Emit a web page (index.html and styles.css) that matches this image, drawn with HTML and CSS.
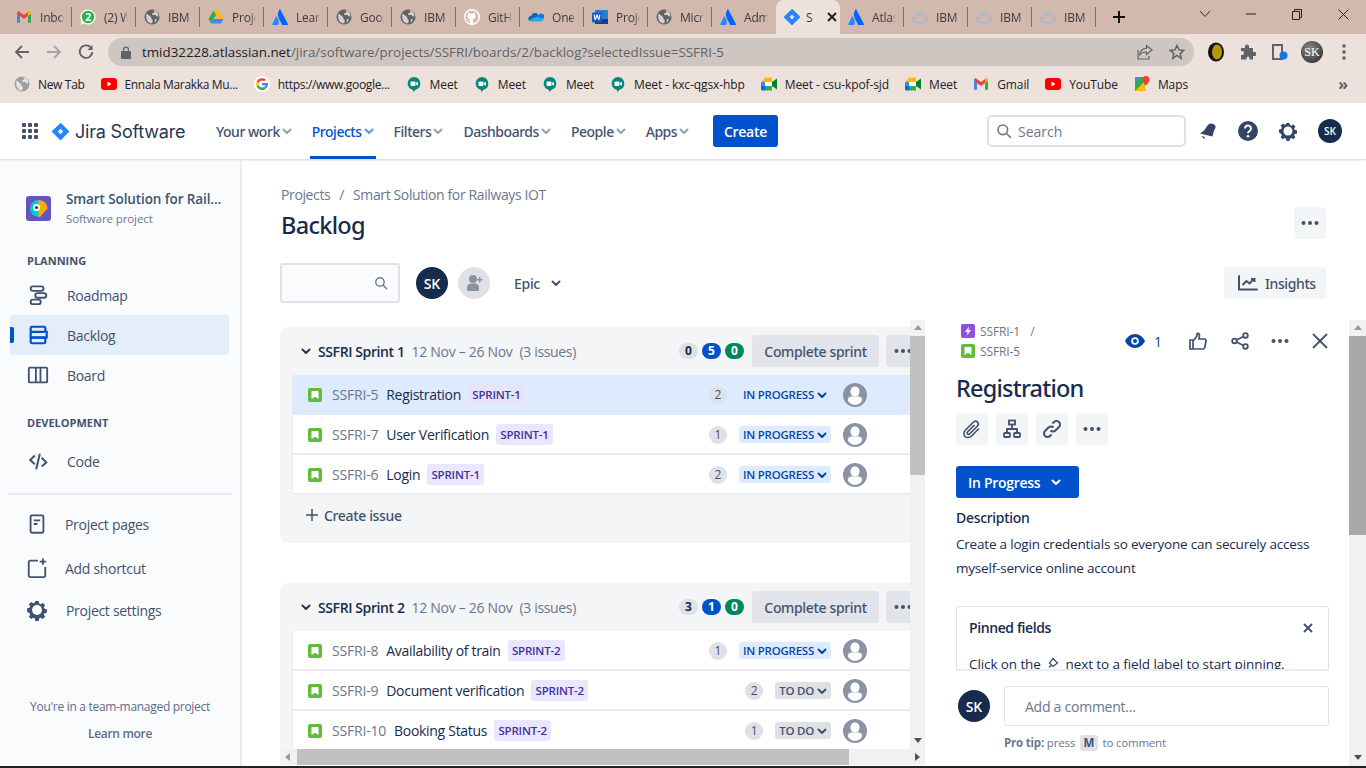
FILE: index.html
```html
<!DOCTYPE html>
<html lang="en">
<head>
    <meta charset="UTF-8">
    <meta name="viewport" content="width=device-width, initial-scale=1.0">
    <title>Backlog - Jira</title>
    <link rel="stylesheet" href="styles.css">
</head>
<body>
    <svg class="icon-defs" width="0" height="0" aria-hidden="true">
        <symbol id="i-gmail" viewBox="0 0 16 16"><path d="M1 3.500v10h3V7l4 3 4-3v6.500h3v-10L13.500 2 8 6 2.500 2z" fill="#ea4335"/><path d="M1 3.500v10h3V7z" fill="#4285f4"/><path d="M15 3.500v10h-3V7z" fill="#34a853"/><path d="M12 7V3l1.500-1L15 3.500V5z" fill="#fbbc04"/></symbol>
        <symbol id="i-whatsapp" viewBox="0 0 16 16"><path d="M8 .5a7.500 7.500 0 0 0-6.400 11.400L.6 15.500l3.700-1A7.500 7.500 0 1 0 8 .5z" fill="#fff"/><circle cx="8" cy="8" r="6.200" fill="#25b04a"/><text x="8" y="11.800" font-family="Open Sans" font-size="11" font-weight="700" fill="#fff" text-anchor="middle">2</text></symbol>
        <symbol id="i-globe" viewBox="0 0 16 16"><circle cx="8" cy="8" r="7.500" fill="#5f6368"/><path d="M2.500 4.500 7 8l.5 2 1 .5V14l-2 .5C3 13 1.500 9 2.500 4.500zM9.500 1l1 2.500-2.500 1 .5 1.500h3l2 2 1-1.500C14 3.500 12 1.500 9.500 1zM11 10l2 .5-1.500 2.500-1-.5z" fill="#d9d0cb"/></symbol>
        <symbol id="i-drive" viewBox="0 0 16 16"><path d="M5.500 1.500h5L15.500 10h-5z" fill="#fbbc04"/><path d="M5.500 1.500.5 10 3 14.500 8 6z" fill="#34a853"/><path d="M3 14.500h10l2.500-4.500h-10z" fill="#4285f4"/></symbol>
        <symbol id="i-atlassian" viewBox="0 0 16 16"><path d="M4.600 7.700c-.2-.3-.5-.2-.7.1L.2 15.200c-.2.400 0 .8.400.8h5.200c.2 0 .4-.1.500-.3 1-2.300.5-5.800-1.700-8z" fill="#2684ff"/><path d="M7.500.4C5.500 3.500 5.600 7 7 9.700l3 5.900c.1.200.3.400.5.400h5.100c.4 0 .6-.4.400-.8L8.300.4C8.100 0 7.700 0 7.500.4z" fill="#0065ff"/></symbol>
        <symbol id="i-github" viewBox="0 0 16 16"><circle cx="8" cy="8" r="8" fill="#fff"/><path d="M8 1.500A6.500 6.500 0 0 0 6 14.200v-2c-1.800.4-2.200-.8-2.200-.8-.3-.8-.7-1-.7-1-.6-.4 0-.4 0-.4.600 0 1 .7 1 .7.600 1 1.500.7 1.900.5 0-.4.200-.7.400-.9-1.500-.2-3-.7-3-3.200 0-.7.200-1.300.6-1.700 0-.2-.3-.8.100-1.700 0 0 .6-.2 1.800.7a6 6 0 0 1 3.200 0c1.200-.9 1.800-.7 1.800-.7.400.9.100 1.500.1 1.700.4.400.6 1 .6 1.700 0 2.500-1.500 3-3 3.200.3.200.5.600.5 1.200v2.900A6.500 6.500 0 0 0 8 1.500z" fill="#d3b8ae"/></symbol>
        <symbol id="i-onedrive" viewBox="0 0 16 16"><path d="M6.500 4a4 4 0 0 1 4 2.200L7 10 .8 11.500C-.4 9.500.9 7 3 7a4 4 0 0 1 3.500-3z" fill="#0364b8"/><path d="M10.500 6.200A3 3 0 0 1 15.900 9L7 11z" fill="#0f78d4"/><path d="M.8 11.500c.5.700 1.200 1 2.200 1h10c1.400 0 2.600-1.300 2.900-3.500L7 8z" fill="#28a8ea"/></symbol>
        <symbol id="i-word" viewBox="0 0 16 16"><rect x="3" y="1" width="13" height="14" rx="1" fill="#2b7cd3"/><rect x="3" y="10" width="13" height="5" fill="#103f91"/><rect y="3.500" width="10" height="10" rx="1" fill="#185abd"/><path d="m1.500 5.500 1.200 5.500h1.100L5 7.500 6.200 11h1.100l1.200-5.500H7.400L6.700 9 5.600 5.500h-1.200L3.300 9l-.7-3.500z" fill="#fff"/></symbol>
        <symbol id="i-jira" viewBox="0 0 16 16"><path d="M15.700 7.300 8.700.300 8 0 .3 7.300a1 1 0 0 0 0 1.400l7 7c.4.400 1 .4 1.400 0l7-7a1 1 0 0 0 0-1.400zM8 10.500 5.500 8 8 5.500l2.500 2.500z" fill="#2684ff"/></symbol>
        <symbol id="i-ibm" viewBox="0 0 16 16"><path d="M4.500 13.500a3 3 0 0 1-.5-6A4.500 4.500 0 0 1 12.500 7a3.300 3.300 0 0 1 0 6.500zM5 5 3.500 3.500M8 4V1.500M11 5l1.500-1.500" fill="none" stroke="#85bde8" stroke-width="1"/></symbol>
        <symbol id="i-meet" viewBox="0 0 16 16"><path d="M8 1a6.500 6.500 0 0 0-1 12.900V16l3-2.400A6.500 6.500 0 0 0 8 1z" fill="#00897b"/><rect x="4.500" y="5.500" width="5" height="4.500" rx="1" fill="#fff"/><path d="m10 7 2-1.300v4L10 8.500z" fill="#fff"/></symbol>
        <symbol id="i-gmeet" viewBox="0 0 16 16"><path d="M4 1.500h7v4.500H0z" fill="#fbbc04"/><path d="M0 6h4v4H0z" fill="#4285f4"/><path d="M0 10h4v4.500H1.500A1.500 1.500 0 0 1 0 13z" fill="#1967d2"/><path d="M4 10h7v4.500H4z" fill="#34a853"/><path d="M4 6h7v4H4z" fill="#fff"/><path d="m11 6 5-3.500v11L11 10z" fill="#00832d"/></symbol>
        <symbol id="i-youtube" viewBox="0 0 16 16"><rect y="2" width="16" height="12" rx="3" fill="#f00"/><path d="m6.500 5.500 4 2.500-4 2.500z" fill="#fff"/></symbol>
        <symbol id="i-maps" viewBox="0 0 16 16"><path d="M1 1h10v14H1z" fill="#34a853"/><path d="M1 1h5L1 6z" fill="#4285f4"/><path d="m1 15 9-9 2 9z" fill="#fbbc04"/><path d="M12 0a3.500 3.500 0 0 0-3.500 3.500C8.500 6 12 9.500 12 9.500s3.500-3.500 3.500-6A3.500 3.500 0 0 0 12 0z" fill="#ea4335"/></symbol>
        <symbol id="i-google" viewBox="0 0 16 16"><circle cx="8" cy="8" r="8" fill="#fff"/><path d="M14 8.200c0-.5 0-.9-.1-1.200H8v2.300h3.400c-.1.700-.5 1.300-1.200 1.700l1.800 1.400c1.200-1 2-2.500 2-4.200z" fill="#4285f4"/><path d="M8 14c1.700 0 3-.6 4-1.600L10.200 11c-.5.300-1.300.6-2.200.6a3.600 3.600 0 0 1-3.400-2.500L2.700 10.500A6 6 0 0 0 8 14z" fill="#34a853"/><path d="M4.600 9.100a3.600 3.600 0 0 1 0-2.200L2.700 5.500a6 6 0 0 0 0 5z" fill="#fbbc04"/><path d="M8 4.400c1 0 1.700.4 2.200.8l1.700-1.600A6 6 0 0 0 2.700 5.500l1.900 1.400A3.600 3.600 0 0 1 8 4.400z" fill="#ea4335"/></symbol>
        <symbol id="i-globe-light" viewBox="0 0 16 16"><circle cx="8" cy="8" r="7.500" fill="#9aa0a6"/><path d="M2.500 4.500 7 8l.5 2 1 .5V14l-2 .5C3 13 1.500 9 2.500 4.500zM9.500 1l1 2.500-2.500 1 .5 1.500h3l2 2 1-1.500C14 3.500 12 1.500 9.500 1z" fill="#ede1dc"/></symbol>
        <symbol id="i-chev" viewBox="0 0 14 14"><path d="m3.500 5.500 3.500 3.500 3.500-3.500" fill="none" stroke="currentColor" stroke-width="2" stroke-linecap="round" stroke-linejoin="round"/></symbol>
        <symbol id="i-story" viewBox="0 0 14 14"><rect width="14" height="14" rx="2" fill="#63ba3c"/><path d="M4 3h6a.5.5 0 0 1 .5.500V11L7 8.800 3.500 11V3.500A.5.5 0 0 1 4 3z" fill="#fff"/></symbol>
        <symbol id="i-user" viewBox="0 0 24 24"><circle cx="12" cy="12" r="12" fill="#8993a4"/><rect x="7.500" y="3.500" width="9" height="10" rx="4.500" fill="#fff"/><path d="M5 16a3 3 0 0 1 3-2.500h8a3 3 0 0 1 3 2.500v1c0 2.500-3.500 4.800-7 4.800S5 19.500 5 17z" fill="#fff"/></symbol>
        <symbol id="i-dots" viewBox="0 0 20 20"><circle cx="3.500" cy="10" r="2" fill="currentColor"/><circle cx="10" cy="10" r="2" fill="currentColor"/><circle cx="16.500" cy="10" r="2" fill="currentColor"/></symbol>
        <symbol id="i-gear" viewBox="0 0 20 20"><path d="M8.300 1h3.400l.5 2.400 1.600.7 2.100-1.300 2.300 2.300-1.300 2.100.7 1.600 2.400.5v3.400l-2.400.5-.7 1.600 1.300 2.100-2.300 2.300-2.100-1.300-1.600.7-.5 2.400H8.300l-.5-2.400-1.600-.7-2.100 1.300-2.300-2.300 1.300-2.100-.7-1.600L0 11.700V8.300l2.400-.5.7-1.600-1.300-2.100 2.300-2.300 2.100 1.300 1.600-.7z" fill="currentColor" transform="translate(1 1) scale(.9)"/><circle cx="10" cy="10" r="4.500" fill="#fff"/></symbol>
        <symbol id="i-search" viewBox="0 0 16 16"><circle cx="6.800" cy="6.800" r="4.800" fill="none" stroke="currentColor" stroke-width="1.600"/><path d="m10.500 10.500 4 4" stroke="currentColor" stroke-width="1.600" stroke-linecap="round"/></symbol>
    </svg>

    <div class="tabstrip">
        <div class="tab"><svg class="fav"><use href="#i-gmail"/></svg><span class="tab-label">Inbox</span></div>
        <div class="tab"><svg class="fav"><use href="#i-whatsapp"/></svg><span class="tab-label">(2) W</span></div>
        <div class="tab"><svg class="fav"><use href="#i-globe"/></svg><span class="tab-label">IBM</span></div>
        <div class="tab"><svg class="fav"><use href="#i-drive"/></svg><span class="tab-label">Proje</span></div>
        <div class="tab"><svg class="fav"><use href="#i-atlassian"/></svg><span class="tab-label">Learn</span></div>
        <div class="tab"><svg class="fav"><use href="#i-globe"/></svg><span class="tab-label">Goog</span></div>
        <div class="tab"><svg class="fav"><use href="#i-globe"/></svg><span class="tab-label">IBM</span></div>
        <div class="tab"><svg class="fav"><use href="#i-github"/></svg><span class="tab-label">GitH</span></div>
        <div class="tab"><svg class="fav"><use href="#i-onedrive"/></svg><span class="tab-label">OneD</span></div>
        <div class="tab"><svg class="fav"><use href="#i-word"/></svg><span class="tab-label">Proje</span></div>
        <div class="tab"><svg class="fav"><use href="#i-globe"/></svg><span class="tab-label">Micr</span></div>
        <div class="tab no-sep"><svg class="fav"><use href="#i-atlassian"/></svg><span class="tab-label">Adm</span></div>
        <div class="tab tab-active"><svg class="fav"><use href="#i-jira"/></svg><span class="tab-label">S</span><svg class="tab-close" width="10" height="10" viewBox="0 0 10 10"><path d="m1 1 8 8M9 1 1 9" stroke="#222" stroke-width="2"/></svg></div>
        <div class="tab"><svg class="fav"><use href="#i-atlassian"/></svg><span class="tab-label">Atlas</span></div>
        <div class="tab"><svg class="fav"><use href="#i-ibm"/></svg><span class="tab-label">IBM</span></div>
        <div class="tab"><svg class="fav"><use href="#i-ibm"/></svg><span class="tab-label">IBM</span></div>
        <div class="tab"><svg class="fav"><use href="#i-ibm"/></svg><span class="tab-label">IBM</span></div>
        <div class="tab-new"><svg width="14" height="14" viewBox="0 0 14 14"><path d="M7 1v12M1 7h12" stroke="#111" stroke-width="2"/></svg></div>
        <div class="win-controls">
            <div class="win-btn"><svg width="12" height="12" viewBox="0 0 12 12"><path d="m1 3 5 5.500L11 3" fill="none" stroke="#333" stroke-width="1"/></svg></div>
            <div class="win-btn"><svg width="10" height="10" viewBox="0 0 10 10"><path d="M0 5h10" stroke="#222" stroke-width="1"/></svg></div>
            <div class="win-btn"><svg width="10" height="11" viewBox="0 0 10 11"><path d="M.5 2.500h7v8h-7zM2.500 2.500v-2h7v8h-2" fill="none" stroke="#222" stroke-width="1"/></svg></div>
            <div class="win-btn"><svg width="11" height="11" viewBox="0 0 11 11"><path d="m.5.500 10 10m0-10-10 10" stroke="#222" stroke-width="1"/></svg></div>
        </div>
    </div>

    <div class="toolbar">
        <div class="tool-btn"><svg width="16" height="16" viewBox="0 0 16 16"><path d="M15 8H2M8 2 2 8l6 6" fill="none" stroke="#5f6368" stroke-width="1.800"/></svg></div>
        <div class="tool-btn"><svg width="16" height="16" viewBox="0 0 16 16"><path d="M1 8h13M8 2l6 6-6 6" fill="none" stroke="#a9a4a1" stroke-width="1.800"/></svg></div>
        <div class="tool-btn"><svg width="16" height="16" viewBox="0 0 16 16"><path d="M13.500 4.500A6.300 6.300 0 1 0 14.300 8" fill="none" stroke="#5f6368" stroke-width="1.800"/><path d="M14.500 1v5h-5z" fill="#5f6368"/></svg></div>
        <div class="url-pill">
            <svg class="url-lock" width="10" height="13" viewBox="0 0 10 13"><path d="M2 5V3.500a3 3 0 0 1 6 0V5h1a1 1 0 0 1 1 1v6a1 1 0 0 1-1 1H1a1 1 0 0 1-1-1V6a1 1 0 0 1 1-1zm1.200 0h3.600V3.500a1.800 1.800 0 0 0-3.600 0z" fill="#5f6368"/></svg>
            <span class="url-text"><b>tmid32228.atlassian.net</b>/jira/software/projects/SSFRI/boards/2/backlog?selectedIssue=SSFRI-5</span>
            <svg class="url-share" width="16" height="16" viewBox="0 0 16 16"><path d="M9.500 1.500 15 6l-5.500 4.500V8C6 8 4 9 2.500 11.500 3 7.500 5.500 4.500 9.500 4.200zM1 6v9h11v-3" fill="none" stroke="#5f6368" stroke-width="1.200"/></svg>
            <svg class="url-star" width="16" height="16" viewBox="0 0 16 16"><path d="m8 1.500 2 4.400 4.800.5-3.600 3.200 1 4.700L8 11.500l-4.200 2.800 1-4.700L1.200 6.400 6 5.900z" fill="none" stroke="#5f6368" stroke-width="1.500"/></svg>
        </div>
        <div class="tool-ext">
            <svg width="16" height="20" viewBox="0 0 16 20"><ellipse cx="8" cy="10" rx="8" ry="9.500" fill="#111"/><ellipse cx="9" cy="10" rx="5" ry="7.500" fill="#b8960c"/></svg>
            <svg width="16" height="16" viewBox="0 0 16 16"><path d="M1 4h4V2.500a2 2 0 0 1 4 0V4h4v4h1.500a2 2 0 0 1 0 4H13v3.500H9.500V14a1.500 1.500 0 0 0-3 0v1.500H1V11h1a2 2 0 0 0 0-4H1z" fill="#5f6368"/></svg>
            <svg width="16" height="16" viewBox="0 0 16 16"><path d="M1 1h9v14H1z" fill="none" stroke="#5f6368" stroke-width="2"/><circle cx="11.500" cy="11.500" r="4" fill="#1a73e8"/></svg>
            <div class="tool-avatar">SK</div>
            <svg width="4" height="16" viewBox="0 0 4 16"><circle cx="2" cy="2" r="1.800" fill="#5f6368"/><circle cx="2" cy="8" r="1.800" fill="#5f6368"/><circle cx="2" cy="14" r="1.800" fill="#5f6368"/></svg>
        </div>
    </div>

    <div class="bookmarks">
        <div class="bm bm-tight"><svg class="fav"><use href="#i-globe-light"/></svg>New Tab</div>
        <div class="bm bm-tight"><svg class="fav"><use href="#i-youtube"/></svg>Ennala Marakka Mu...</div>
        <div class="bm bm-tight"><svg class="fav"><use href="#i-google"/></svg>https://www.google...</div>
        <div class="bm"><svg class="fav"><use href="#i-meet"/></svg>Meet</div>
        <div class="bm"><svg class="fav"><use href="#i-meet"/></svg>Meet</div>
        <div class="bm"><svg class="fav"><use href="#i-meet"/></svg>Meet</div>
        <div class="bm"><svg class="fav"><use href="#i-meet"/></svg>Meet - kxc-qgsx-hbp</div>
        <div class="bm"><svg class="fav"><use href="#i-gmeet"/></svg>Meet - csu-kpof-sjd</div>
        <div class="bm"><svg class="fav"><use href="#i-gmeet"/></svg>Meet</div>
        <div class="bm"><svg class="fav"><use href="#i-gmail"/></svg>Gmail</div>
        <div class="bm"><svg class="fav"><use href="#i-youtube"/></svg>YouTube</div>
        <div class="bm"><svg class="fav"><use href="#i-maps"/></svg>Maps</div>
        <div class="bm-more">»</div>
    </div>

    <header class="topnav">
        <svg class="app-grid" width="16" height="16" viewBox="0 0 16 16"><g fill="#42526e"><rect width="4" height="4" rx="1"/><rect x="6" width="4" height="4" rx="1"/><rect x="12" width="4" height="4" rx="1"/><rect y="6" width="4" height="4" rx="1"/><rect x="6" y="6" width="4" height="4" rx="1"/><rect x="12" y="6" width="4" height="4" rx="1"/><rect y="12" width="4" height="4" rx="1"/><rect x="6" y="12" width="4" height="4" rx="1"/><rect x="12" y="12" width="4" height="4" rx="1"/></g></svg>
        <svg class="jira-logo"><use href="#i-jira"/></svg>
        <span class="jira-name">Jira Software</span>
        <nav class="nav-items">
            <a class="nav-item">Your work<svg class="chev"><use href="#i-chev"/></svg></a>
            <a class="nav-item nav-active">Projects<svg class="chev"><use href="#i-chev"/></svg></a>
            <a class="nav-item">Filters<svg class="chev"><use href="#i-chev"/></svg></a>
            <a class="nav-item">Dashboards<svg class="chev"><use href="#i-chev"/></svg></a>
            <a class="nav-item">People<svg class="chev"><use href="#i-chev"/></svg></a>
            <a class="nav-item">Apps<svg class="chev"><use href="#i-chev"/></svg></a>
        </nav>
        <button class="create-btn">Create</button>
        <div class="nav-search"><svg class="nav-search-icon"><use href="#i-search"/></svg>Search</div>
        <div class="nav-icons">
            <svg width="20" height="20" viewBox="0 0 20 20"><path d="M12.500 2.500c2.500 0 4.500 1 5 2.500.5 2-1 3.500-2 6l-1 4.500L2 12.500 6 9.500C8 7.500 9.500 3 12.500 2.500zM3.500 15l3.500 1-1 2z" fill="#344563"/></svg>
            <svg width="20" height="20" viewBox="0 0 20 20"><circle cx="10" cy="10" r="10" fill="#344563"/><path d="M7 7.500a3 3 0 1 1 4.600 2.500c-1 .7-1.600 1.100-1.600 2.200" fill="none" stroke="#fff" stroke-width="2"/><circle cx="10" cy="15.200" r="1.300" fill="#fff"/></svg>
            <svg class="nav-gear"><use href="#i-gear"/></svg>
            <div class="avatar avatar-sm">SK</div>
        </div>
    </header>

    <div class="page">
        <aside class="sidebar">
            <div class="project-head">
                <svg width="25" height="25" viewBox="0 0 25 25"><rect width="25" height="25" rx="3" fill="#6554c0"/><path d="M12.500 4a8.500 8.500 0 0 0 0 17c.5 0 1-.2 1-.8z" fill="#00c7e5"/><path d="M12.500 4c5 0 9 4 9 8.500L14 21c-1 0-1.500-.5-1.500-1z" fill="#ffab00"/><circle cx="10.500" cy="11.500" r="3.500" fill="#fff"/><circle cx="10.500" cy="11.500" r="1.600" fill="#253858"/></svg>
                <div>
                    <div class="project-name">Smart Solution for Rail...</div>
                    <div class="project-type">Software project</div>
                </div>
            </div>
            <div class="side-title side-title-plan">PLANNING</div>
            <a class="side-row">
                <svg class="side-icon" viewBox="0 0 24 24"><g fill="none" stroke="currentColor" stroke-width="2"><rect x="4" y="2.500" width="14" height="5" rx="2.500"/><rect x="9" y="10" width="12" height="5" rx="2.500"/><rect x="4" y="17" width="11" height="5" rx="2.500"/></g></svg>Roadmap
            </a>
            <a class="side-row side-active">
                <svg class="side-icon" viewBox="0 0 24 24"><g fill="none" stroke="currentColor" stroke-width="2.400"><rect x="4" y="3" width="16" height="5.500" rx="1.500"/><path d="M20 8.500h1.500v6H4V8.500"/><rect x="4" y="15" width="16" height="6" rx="1.500"/></g></svg>Backlog
            </a>
            <a class="side-row">
                <svg class="side-icon" viewBox="0 0 24 24"><path d="M3 4h18a1 1 0 0 1 1 1v14a1 1 0 0 1-1 1H3a1 1 0 0 1-1-1V5a1 1 0 0 1 1-1zm6.700 1v14m5-14v14" fill="none" stroke="currentColor" stroke-width="2"/></svg>Board
            </a>
            <div class="side-title side-title-dev">DEVELOPMENT</div>
            <a class="side-row">
                <svg class="side-icon" viewBox="0 0 24 24"><path d="M8.500 6 3.500 11l5 4.500M16 8.500l5 5-5 4.500M14 4l-4 17" fill="none" stroke="currentColor" stroke-width="2.200"/></svg>Code
            </a>
            <div class="side-line"></div>
            <a class="side-row side-low">
                <svg class="side-icon" viewBox="0 0 24 24"><rect x="5" y="2.500" width="14" height="19" rx="1.500" fill="none" stroke="currentColor" stroke-width="2"/><path d="M8.500 7h7v2h-7zM8.500 11h4v2h-4z" fill="currentColor"/></svg>Project pages
            </a>
            <a class="side-row side-low side-low-add">
                <svg class="side-icon" viewBox="0 0 24 24"><path d="M13 4H5a2 2 0 0 0-2 2v14a2 2 0 0 0 2 2h14a2 2 0 0 0 2-2v-9" fill="none" stroke="currentColor" stroke-width="2"/><path d="M17.500 1.500h2v2.500H22v2h-2.500v2.500h-2V6H15V4h2.500z" fill="currentColor"/></svg>Add shortcut
            </a>
            <a class="side-row side-low side-low-settings">
                <svg class="side-icon"><use href="#i-gear"/></svg>Project settings
            </a>
            <div class="side-foot">
                <div>You're in a team-managed project</div>
                <div class="side-learn">Learn more</div>
            </div>
        </aside>

        <main class="content">
            <div class="content-head">
                <div class="crumbs"><span>Projects</span><span class="crumb-sep">/</span><span>Smart Solution for Railways IOT</span></div>
                <div class="title-row">
                    <h1>Backlog</h1>
                    <button class="square-btn"><svg class="dots"><use href="#i-dots"/></svg></button>
                </div>
                <div class="filter-row">
                    <div class="filter-search"><svg class="filter-search-icon"><use href="#i-search"/></svg></div>
                    <div class="avatar">SK</div>
                    <div class="avatar-add"><svg width="20" height="20" viewBox="0 0 20 20"><circle cx="9" cy="6" r="4" fill="#8993a4"/><path d="M3 15c0-3 1.500-4.500 4-4.500h4c2.500 0 4 1.500 4 4.500v1.500c0 1-.7 1.500-1.500 1.500h-9C3.700 18 3 17.500 3 16.500z" fill="#8993a4"/><path d="M15 4h1.500v2H18.500v1.500h-2v2H15v-2h-2V6h2z" fill="#8993a4"/></svg></div>
                    <div class="epic">Epic<svg class="chev"><use href="#i-chev"/></svg></div>
                    <button class="insights-btn">
                        <svg width="20" height="16" viewBox="0 0 20 16"><path d="M1 1v13.500h18" fill="none" stroke="currentColor" stroke-width="2" stroke-linecap="round"/><path d="m4.500 10 4-4 3 2.500 4.500-4.500m-3 0h3.500v3" fill="none" stroke="currentColor" stroke-width="2"/></svg>Insights
                    </button>
                </div>
            </div>

            <div class="panes">
                <section class="backlog-pane">
                    <div class="backlog-scroll">
                        <div class="sprint">
                            <div class="sprint-head">
                                <svg class="chev chev-dark"><use href="#i-chev"/></svg>
                                <span class="sprint-name">SSFRI Sprint 1</span>
                                <span class="sprint-dates">12 Nov – 26 Nov</span>
                                <span class="sprint-count">(3 issues)</span>
                                <div class="sprint-tools">
                                    <span class="pill pill-grey">0</span><span class="pill pill-blue">5</span><span class="pill pill-green">0</span>
                                    <button class="complete-btn">Complete sprint</button>
                                    <button class="sprint-more"><svg class="dots"><use href="#i-dots"/></svg></button>
                                </div>
                            </div>
                            <div class="issues">
                                <div class="issue issue-selected">
                                    <svg class="story"><use href="#i-story"/></svg><span class="issue-key">SSFRI-5</span><span class="issue-name">Registration</span><span class="chip">SPRINT-1</span>
                                    <span class="points">2</span><span class="status status-prog">IN PROGRESS<svg class="chev-s"><use href="#i-chev"/></svg></span><svg class="assignee"><use href="#i-user"/></svg>
                                </div>
                                <div class="issue">
                                    <svg class="story"><use href="#i-story"/></svg><span class="issue-key">SSFRI-7</span><span class="issue-name">User Verification</span><span class="chip">SPRINT-1</span>
                                    <span class="points">1</span><span class="status status-prog">IN PROGRESS<svg class="chev-s"><use href="#i-chev"/></svg></span><svg class="assignee"><use href="#i-user"/></svg>
                                </div>
                                <div class="issue">
                                    <svg class="story"><use href="#i-story"/></svg><span class="issue-key">SSFRI-6</span><span class="issue-name">Login</span><span class="chip">SPRINT-1</span>
                                    <span class="points">2</span><span class="status status-prog">IN PROGRESS<svg class="chev-s"><use href="#i-chev"/></svg></span><svg class="assignee"><use href="#i-user"/></svg>
                                </div>
                            </div>
                            <div class="create-issue"><svg width="14" height="14" viewBox="0 0 14 14"><path d="M7 1v12M1 7h12" stroke="#42526e" stroke-width="1.500"/></svg>Create issue</div>
                        </div>

                        <div class="sprint">
                            <div class="sprint-head">
                                <svg class="chev chev-dark"><use href="#i-chev"/></svg>
                                <span class="sprint-name">SSFRI Sprint 2</span>
                                <span class="sprint-dates">12 Nov – 26 Nov</span>
                                <span class="sprint-count">(3 issues)</span>
                                <div class="sprint-tools">
                                    <span class="pill pill-grey">3</span><span class="pill pill-blue">1</span><span class="pill pill-green">0</span>
                                    <button class="complete-btn">Complete sprint</button>
                                    <button class="sprint-more"><svg class="dots"><use href="#i-dots"/></svg></button>
                                </div>
                            </div>
                            <div class="issues">
                                <div class="issue">
                                    <svg class="story"><use href="#i-story"/></svg><span class="issue-key">SSFRI-8</span><span class="issue-name">Availability of train</span><span class="chip">SPRINT-2</span>
                                    <span class="points">1</span><span class="status status-prog">IN PROGRESS<svg class="chev-s"><use href="#i-chev"/></svg></span><svg class="assignee"><use href="#i-user"/></svg>
                                </div>
                                <div class="issue">
                                    <svg class="story"><use href="#i-story"/></svg><span class="issue-key">SSFRI-9</span><span class="issue-name">Document verification</span><span class="chip">SPRINT-2</span>
                                    <span class="points">2</span><span class="status status-todo">TO DO<svg class="chev-s"><use href="#i-chev"/></svg></span><svg class="assignee"><use href="#i-user"/></svg>
                                </div>
                                <div class="issue">
                                    <svg class="story"><use href="#i-story"/></svg><span class="issue-key">SSFRI-10</span><span class="issue-name">Booking Status</span><span class="chip">SPRINT-2</span>
                                    <span class="points">1</span><span class="status status-todo">TO DO<svg class="chev-s"><use href="#i-chev"/></svg></span><svg class="assignee"><use href="#i-user"/></svg>
                                </div>
                            </div>
                        </div>
                    </div>
                    <div class="vbar vbar-light">
                        <span class="arrow-up"></span><span class="vthumb"></span><span class="arrow-down"></span>
                    </div>
                    <div class="hbar">
                        <span class="arrow-left"></span><span class="hthumb"></span><span class="arrow-right"></span>
                    </div>
                </section>

                <section class="detail-pane">
                    <div class="detail-main">
                        <div class="detail-scroll">
                            <div class="detail-top">
                                <div class="detail-crumbs">
                                    <div class="detail-crumb"><svg class="story" viewBox="0 0 14 14"><rect width="14" height="14" rx="2" fill="#904ee2"/><path d="M8 2.500 4 8h2.500L6 11.500 10 6H7.500z" fill="#fff"/></svg>SSFRI-1<span class="detail-slash">/</span></div>
                                    <div class="detail-crumb"><svg class="story"><use href="#i-story"/></svg>SSFRI-5</div>
                                </div>
                                <div class="detail-actions">
                                    <span class="watch"><svg width="20" height="14" viewBox="0 0 20 14"><path d="M10 0c4.500 0 8 3 10 7-2 4-5.500 7-10 7S2 11 0 7c2-4 5.500-7 10-7z" fill="#0747a6"/><circle cx="10" cy="7" r="3.800" fill="#fff"/><circle cx="10" cy="7" r="2" fill="#0747a6"/></svg><span>1</span></span>
                                    <svg class="act-like" width="18" height="18" viewBox="0 0 18 18"><path d="M1 8h3v9H1zM4.500 8.500 8 4V1.500c1.500-.5 2.500.5 2.500 2L10 7h5.500c1 0 1.700.8 1.500 1.800l-1.200 6.500c-.2 1-1 1.700-2 1.700H4.500" fill="none" stroke="#42526e" stroke-width="1.700"/></svg>
                                    <svg class="act-share" width="18" height="18" viewBox="0 0 18 18"><g fill="none" stroke="#42526e" stroke-width="1.800"><circle cx="14.500" cy="3.500" r="2.300"/><circle cx="14.500" cy="14.500" r="2.300"/><circle cx="3.500" cy="9" r="2.300"/><path d="m5.500 8 7-3.500M5.500 10l7 3.500"/></g></svg>
                                    <svg class="dots act-dots"><use href="#i-dots"/></svg>
                                    <svg class="act-close" width="16" height="16" viewBox="0 0 16 16"><path d="m1 1 14 14M15 1 1 15" stroke="#42526e" stroke-width="1.800"/></svg>
                                </div>
                            </div>
                            <h2 class="detail-title">Registration</h2>
                            <div class="quick-row">
                                <button class="square-btn"><svg width="20" height="20" viewBox="0 0 20 20"><path d="M17 9.500 9.500 17c-2 2-5 2-6.500.5s-1.500-4.500.5-6.500L11 3.500c1.500-1.500 3.500-1.500 4.500-.5s1 3-.5 4.500L8 14.500c-1 1-2 1-2.500.5s-.5-1.500.5-2.500L12.500 6" fill="none" stroke="#42526e" stroke-width="1.600"/></svg></button>
                                <button class="square-btn"><svg width="20" height="20" viewBox="0 0 20 20"><g fill="none" stroke="#42526e" stroke-width="1.800"><rect x="7" y="1.500" width="6" height="4"/><rect x="2" y="14" width="6" height="4" rx="1"/><rect x="12" y="14" width="6" height="4" rx="1"/><path d="M10 5.500V10M5 14v-4h10v4"/></g></svg></button>
                                <button class="square-btn"><svg width="20" height="20" viewBox="0 0 20 20"><g fill="none" stroke="#42526e" stroke-width="2"><path d="M8.500 11.500a3.500 3.500 0 0 0 5 0l3.500-3.500a3.500 3.500 0 0 0-5-5l-1.500 1.500"/><path d="M11.500 8.500a3.500 3.500 0 0 0-5 0L3 12a3.500 3.500 0 0 0 5 5l1.500-1.500"/></g></svg></button>
                                <button class="square-btn"><svg class="dots"><use href="#i-dots"/></svg></button>
                            </div>
                            <button class="state-btn">In Progress<svg class="chev"><use href="#i-chev"/></svg></button>
                            <div class="desc-label">Description</div>
                            <p class="desc-text">Create a login credentials so everyone can securely access myself-service online account</p>
                            <div class="pinned">
                                <div class="pinned-head"><span>Pinned fields</span><svg width="10" height="10" viewBox="0 0 10 10"><path d="m1 1 8 8M9 1 1 9" stroke="#42526e" stroke-width="2"/></svg></div>
                                <div class="pinned-text">Click on the <svg class="pin-glyph" width="12" height="12" viewBox="0 0 12 12"><path d="M6 1.500 10.500 6 6 9.500 2.500 6zM4.500 8 2 10.500" fill="none" stroke="#42526e" stroke-width="1.300"/></svg> next to a field label to start pinning.</div>
                            </div>
                        </div>
                        <div class="comment-box">
                            <div class="comment-row">
                                <div class="avatar avatar-comment">SK</div>
                                <div class="comment-input">Add a comment...</div>
                            </div>
                            <div class="pro-tip"><b>Pro tip:</b> press <span class="kbd">M</span> to comment</div>
                        </div>
                    </div>
                    <div class="vbar vbar-dark">
                        <span class="arrow-up"></span><span class="vthumb"></span><span class="arrow-down"></span>
                    </div>
                </section>
            </div>
        </main>
    </div>
    <div class="taskbar"></div>
</body>
</html>
```

FILE: styles.css
```css
* {
    box-sizing: border-box;
}
html, body {
    margin: 0;
    height: 100%;
    overflow: hidden;
}
body {
    width: 1366px;
    height: 768px;
    display: flex;
    flex-direction: column;
    font-family: "Open Sans", "Noto Sans", sans-serif;
    font-size: 14px;
    color: #172b4d;
    background: #fff;
}
button {
    font-family: inherit;
    border: none;
    cursor: pointer;
}
.icon-defs {
    position: absolute;
}
.fav {
    width: 16px;
    height: 16px;
    flex: none;
}

/* browser chrome */
.tabstrip {
    height: 34px;
    flex: none;
    display: flex;
    padding-left: 8px;
    background: #d3b8ae;
}
.tab {
    width: 64px;
    flex: none;
    display: flex;
    align-items: center;
    gap: 8px;
    padding-left: 8px;
    position: relative;
    font-size: 12px;
    letter-spacing: -0.2px;
    color: #3c3c3c;
}
.tab::after {
    content: "";
    position: absolute;
    right: 0;
    top: 7px;
    height: 20px;
    width: 1px;
    background: #7f6f68;
}
.tab.no-sep::after,
.tab-active::after {
    display: none;
}
.tab-label {
    width: 24px;
    flex: none;
    overflow: hidden;
    white-space: nowrap;
    -webkit-mask-image: linear-gradient(90deg, #000 80%, transparent);
    mask-image: linear-gradient(90deg, #000 80%, transparent);
}
.tab-active {
    background: #ede1dc;
    border-radius: 8px 8px 0 0;
    gap: 6px;
}
.tab-active .tab-label {
    width: 8px;
    -webkit-mask-image: none;
    mask-image: none;
}
.tab-close {
    margin-left: 7px;
}
.tab-new {
    width: 28px;
    margin-left: 9px;
    display: flex;
    align-items: center;
    justify-content: center;
}
.win-controls {
    margin-left: auto;
    display: flex;
    height: 28px;
}
.win-btn {
    width: 46px;
    display: flex;
    align-items: center;
    justify-content: center;
}
.toolbar {
    height: 33px;
    flex: none;
    display: flex;
    align-items: center;
    padding: 4px 0 1px 6px;
    background: #ede1dc;
}
.tool-btn {
    width: 32px;
    display: flex;
    justify-content: center;
}
.url-pill {
    margin-left: 6px;
    width: 1086px;
    height: 28px;
    display: flex;
    align-items: center;
    padding-left: 13px;
    background: #cfc6c1;
    border-radius: 14px;
}
.url-lock {
    flex: none;
}
.url-text {
    margin-left: 11px;
    font-size: 13.35px;
    color: #5f6368;
    white-space: nowrap;
}
.url-text b {
    font-weight: 400;
    color: #202124;
}
.url-share {
    margin-left: auto;
}
.url-star {
    margin: 0 9px 0 16px;
}
.tool-ext {
    display: grid;
    grid-template-columns: repeat(5, 32px);
    justify-items: center;
    align-items: center;
    padding-left: 6px;
}
.tool-avatar {
    width: 22px;
    height: 22px;
    border-radius: 50%;
    background: radial-gradient(circle at 40% 35%, #888, #222);
    color: #fff;
    font-family: "Liberation Serif", serif;
    font-size: 12px;
    line-height: 22px;
    text-align: center;
}
.bookmarks {
    height: 36px;
    flex: none;
    display: flex;
    align-items: center;
    padding: 0 0 2px 6px;
    background: #ede1dc;
    font-size: 12px;
    color: #202124;
    letter-spacing: -0.1px;
}
.bm {
    display: flex;
    align-items: center;
    gap: 8px;
    padding: 0 8px;
    white-space: nowrap;
}
.bm-tight {
    letter-spacing: -0.33px;
}
.bm-more {
    margin-left: auto;
    margin-right: 18px;
    font-size: 16px;
    font-weight: 700;
    color: #5f6368;
}

/* jira top bar */
.topnav {
    height: 56px;
    flex: none;
    display: flex;
    align-items: center;
    padding-left: 22px;
    background: #fff;
    box-shadow: 0 1px 1px #dfe1e6, 0 2px 2px #f0f1f4;
    position: relative;
    z-index: 2;
}
.app-grid {
    flex: none;
}
.jira-logo {
    width: 17px;
    height: 17px;
    margin-left: 14px;
    flex: none;
}
.jira-name {
    margin-left: 6px;
    width: 139px;
    font-family: "Inter", sans-serif;
    font-size: 18px;
    color: #253858;
    white-space: nowrap;
    letter-spacing: -0.2px;
}
.nav-items {
    display: flex;
    width: 479px;
    height: 100%;
    gap: 16px;
}
.nav-item {
    display: flex;
    align-items: center;
    padding-left: 2px;
    font-family: "Noto Sans", sans-serif;
    font-weight: 500;
    color: #42526e;
    border-bottom: 3px solid transparent;
    border-top: 3px solid transparent;
    white-space: nowrap;
    letter-spacing: -0.47px;
}
.chev {
    width: 14px;
    height: 14px;
    flex: none;
}
.nav-item .chev {
    color: #97a0af;
}
.nav-active {
    color: #0052cc;
    border-bottom-color: #0052cc;
}
.nav-active .chev {
    color: #4c9aff;
}
.create-btn {
    margin-left: 20px;
    width: 65px;
    height: 32px;
    background: #0052cc;
    color: #fff;
    font-size: 14px;
    font-weight: 600;
    border-radius: 3px;
    letter-spacing: -0.3px;
}
.nav-search {
    margin-left: 209px;
    width: 199px;
    height: 32px;
    display: flex;
    align-items: center;
    gap: 6px;
    padding-left: 7px;
    border: 2px solid #dfe1e6;
    border-radius: 5px;
    color: #6b778c;
}
.nav-search-icon {
    width: 16px;
    height: 16px;
    color: #6b778c;
}
.nav-icons {
    display: flex;
    align-items: center;
    margin-left: 12px;
    gap: 20px;
}
.nav-gear {
    width: 20px;
    height: 20px;
    color: #344563;
}
.avatar {
    width: 32px;
    height: 32px;
    flex: none;
    border-radius: 50%;
    background: #172b4d;
    color: #fff;
    font-weight: 600;
    font-size: 14px;
    display: flex;
    align-items: center;
    justify-content: center;
}
.avatar-sm {
    width: 24px;
    height: 24px;
    font-size: 10px;
}

/* page */
.page {
    flex: 1;
    display: flex;
    min-height: 0;
}
.taskbar {
    height: 2px;
    flex: none;
    background: #222;
}
.sidebar {
    width: 242px;
    flex: none;
    display: flex;
    flex-direction: column;
    background: #fafbfc;
    border-right: 2px solid #ebecf0;
    color: #42526e;
}
.project-head {
    display: flex;
    align-items: center;
    gap: 15px;
    padding: 30px 0 0 26px;
}
.project-name {
    font-weight: 600;
    font-size: 13.5px;
    line-height: 20px;
    white-space: nowrap;
    letter-spacing: -0.1px;
}
.project-type {
    font-size: 11.5px;
    line-height: 19px;
    color: #6b778c;
    letter-spacing: -0.1px;
}
.side-title {
    font-size: 11px;
    font-weight: 700;
    line-height: 16px;
    padding-left: 27px;
}
.side-title-plan {
    margin-top: 25px;
    margin-bottom: 6px;
}
.side-title-dev {
    margin-top: 20px;
    margin-bottom: 10px;
}
.side-row {
    height: 40px;
    margin: 0 11px 0 10px;
    display: flex;
    align-items: center;
    gap: 18px;
    padding-left: 17px;
    border-radius: 3px;
    position: relative;
    letter-spacing: -0.3px;
}
.side-icon {
    width: 22px;
    height: 22px;
    flex: none;
}
.side-active {
    background: #e4eefb;
}
.side-active .side-icon {
    color: #0052cc;
}
.side-active::before {
    content: "";
    position: absolute;
    left: 0;
    top: 12px;
    height: 16px;
    width: 4px;
    background: #0052cc;
    border-radius: 0 2px 2px 0;
}
.side-line {
    height: 2px;
    margin: 12px 8px 9px;
    background: #ebecf0;
}
.side-low {
    padding-left: 16px;
    gap: 17px;
}
.side-low-add {
    margin-top: 4px;
}
.side-low-settings {
    margin-top: 2px;
    gap: 18px;
}
.side-foot {
    margin-top: auto;
    padding-bottom: 24px;
    font-size: 12px;
    text-align: center;
    color: #5e6c84;
    letter-spacing: -0.3px;
}
.side-learn {
    margin-top: 10px;
    font-weight: 600;
}
.content {
    flex: 1;
    min-width: 0;
    display: flex;
    flex-direction: column;
}
.content-head {
    height: 161px;
    flex: none;
    padding: 26px 40px 0 38px;
}
.crumbs {
    display: flex;
    gap: 9px;
    padding-left: 1px;
    line-height: 20px;
    color: #6b778c;
    letter-spacing: -0.38px;
}
.title-row {
    display: flex;
    align-items: center;
    justify-content: space-between;
    height: 32px;
    margin-top: 2px;
    padding-left: 1px;
}
h1 {
    margin: 3px 0 0;
    font-family: "Noto Sans", sans-serif;
    font-size: 23.5px;
    font-weight: 500;
    color: #172b4d;
    letter-spacing: -0.7px;
}
.square-btn {
    width: 32px;
    height: 32px;
    padding: 0;
    background: #f4f5f7;
    border-radius: 3px;
    display: flex;
    align-items: center;
    justify-content: center;
    color: #42526e;
}
.dots {
    width: 20px;
    height: 20px;
    color: #42526e;
}
.filter-row {
    display: flex;
    align-items: center;
    margin-top: 24px;
    height: 40px;
}
.filter-search {
    width: 120px;
    height: 40px;
    display: flex;
    align-items: center;
    justify-content: flex-end;
    padding-right: 10px;
    background: #fafbfc;
    border: 2px solid #dfe1e6;
    border-radius: 3px;
}
.filter-search-icon {
    width: 14px;
    height: 14px;
    color: #6b778c;
}
.filter-row .avatar {
    margin-left: 16px;
}
.avatar-add {
    width: 32px;
    height: 32px;
    margin-left: 10px;
    border-radius: 50%;
    background: #dfe1e6;
    display: flex;
    align-items: center;
    justify-content: center;
}
.epic {
    margin-left: 24px;
    display: flex;
    align-items: center;
    gap: 9px;
    font-family: "Noto Sans", sans-serif;
    font-weight: 500;
    color: #42526e;
    letter-spacing: -0.3px;
}
.insights-btn {
    margin-left: auto;
    width: 102px;
    height: 32px;
    display: flex;
    align-items: center;
    gap: 7px;
    padding-left: 14px;
    background: #f4f5f7;
    color: #42526e;
    font-family: "Noto Sans", sans-serif;
    font-size: 14px;
    font-weight: 500;
    border-radius: 3px;
    letter-spacing: -0.4px;
}

/* panes */
.panes {
    flex: 1;
    min-height: 0;
    display: flex;
    margin-left: 38px;
}
.backlog-pane {
    width: 645px;
    flex: none;
    display: grid;
    grid-template-columns: 630px 15px;
    grid-template-rows: 1fr 17px;
    min-height: 0;
}
.backlog-scroll {
    overflow: hidden;
    padding-top: 7px;
}
.sprint {
    width: 651px;
    height: 216px;
    margin-bottom: 40px;
    padding: 0 12px;
    background: #f4f5f7;
    border-radius: 8px;
}
.sprint-head {
    height: 48px;
    display: flex;
    align-items: center;
    font-size: 14px;
}
.chev-dark {
    color: #253858;
    margin-left: 7px;
}
.sprint-name {
    margin-left: 5px;
    font-weight: 600;
    letter-spacing: -0.4px;
}
.sprint-dates {
    margin-left: 7px;
    color: #6b778c;
    letter-spacing: -0.3px;
}
.sprint-count {
    margin-left: 7px;
    color: #6b778c;
    letter-spacing: -0.35px;
}
.sprint-tools {
    margin-left: auto;
    display: flex;
    align-items: center;
}
.pill {
    min-width: 19px;
    height: 16px;
    margin-right: 4px;
    border-radius: 8px;
    font-size: 12px;
    font-weight: 700;
    line-height: 16px;
    text-align: center;
}
.pill-grey {
    background: #dfe1e6;
    color: #172b4d;
}
.pill-blue {
    background: #0052cc;
    color: #fff;
}
.pill-green {
    background: #00875a;
    color: #fff;
}
.complete-btn {
    width: 127px;
    height: 32px;
    margin-left: 4px;
    background: #e2e4e9;
    color: #42526e;
    font-family: "Noto Sans", sans-serif;
    font-size: 14px;
    font-weight: 500;
    border-radius: 3px;
    letter-spacing: -0.35px;
}
.sprint-more {
    width: 33px;
    height: 32px;
    margin-left: 7px;
    padding: 0;
    background: #e2e4e9;
    border-radius: 3px;
    display: flex;
    align-items: center;
    justify-content: center;
}
.issues {
    border-left: 1px solid #ebecf0;
    background: #fff;
}
.issue {
    height: 40px;
    display: flex;
    align-items: center;
    padding: 1px 52px 0 15px;
    border-bottom: 2px solid #ebecf0;
    background: #fff;
    letter-spacing: -0.3px;
}
.issue-selected {
    background: #deebff;
    border-bottom-color: #deebff;
}
.story {
    width: 14px;
    height: 14px;
    flex: none;
}
.issue-key {
    margin-left: 10px;
    color: #6b778c;
    letter-spacing: -0.2px;
}
.issue-name {
    margin-left: 8px;
    color: #172b4d;
}
.chip {
    margin-left: 7px;
    width: 57px;
    height: 21px;
    border-radius: 3px;
    background: #eae6ff;
    color: #403294;
    font-size: 11.5px;
    font-weight: 600;
    line-height: 21px;
    text-align: center;
    letter-spacing: -0.2px;
}
.issue-selected .chip {
    background: #e6e4fb;
}
.points {
    margin-left: auto;
    width: 18px;
    height: 18px;
    border-radius: 50%;
    background: #dfe1e6;
    color: #42526e;
    font-size: 12px;
    line-height: 18px;
    text-align: center;
    letter-spacing: 0;
}
.status {
    margin-left: 12px;
    height: 17px;
    display: flex;
    align-items: center;
    padding: 0 2px 0 4px;
    border-radius: 3px;
    font-size: 11.5px;
    font-weight: 600;
    letter-spacing: -0.25px;
}
.status-prog {
    background: #deebff;
    color: #0747a6;
}
.status-todo {
    background: #dfe1e6;
    color: #42526e;
}
.chev-s {
    width: 14px;
    height: 14px;
    margin-left: 1px;
}
.assignee {
    width: 24px;
    height: 24px;
    margin-left: 12px;
    flex: none;
}
.create-issue {
    height: 40px;
    display: flex;
    align-items: center;
    gap: 5px;
    padding-left: 13px;
    font-family: "Noto Sans", sans-serif;
    font-weight: 500;
    color: #42526e;
    letter-spacing: -0.35px;
}

/* scrollbars */
.vbar {
    display: flex;
    flex-direction: column;
    background: #f1f1f1;
    position: relative;
}
.vbar .arrow-up,
.vbar .arrow-down {
    height: 16px;
    flex: none;
    position: relative;
}
.arrow-up::after {
    content: "";
    position: absolute;
    left: 50%;
    top: 5px;
    margin-left: -4px;
    border: 4px solid transparent;
    border-top: 0;
    border-bottom: 5px solid #9a9a9a;
}
.arrow-down::after {
    content: "";
    position: absolute;
    left: 50%;
    top: 5px;
    margin-left: -4px;
    border: 4px solid transparent;
    border-bottom: 0;
    border-top: 5px solid #505050;
}
.vthumb {
    display: block;
}
.vbar-light .vthumb {
    height: 139px;
    background: #c1c1c1;
}
.vbar-light .arrow-down {
    margin-top: auto;
}
.vbar-dark .vthumb {
    height: 199px;
    background: #a8a8a8;
}
.vbar-dark .arrow-down {
    margin-top: auto;
}
.hbar {
    grid-column: 1 / 3;
    display: flex;
    align-items: center;
    height: 16px;
    background: #f1f1f1;
}
.arrow-left,
.arrow-right {
    width: 16px;
    flex: none;
    height: 16px;
    position: relative;
}
.arrow-left::after {
    content: "";
    position: absolute;
    top: 4px;
    left: 5px;
    border: 4px solid transparent;
    border-left: 0;
    border-right: 5px solid #9a9a9a;
}
.arrow-right::after {
    content: "";
    position: absolute;
    top: 4px;
    left: 6px;
    border: 4px solid transparent;
    border-right: 0;
    border-left: 5px solid #505050;
}
.hthumb {
    width: 552px;
    height: 16px;
    margin-left: 1px;
    background: #c1c1c1;
}
.arrow-right {
    margin-left: auto;
}

/* issue detail */
.detail-pane {
    flex: 1;
    min-width: 0;
    display: flex;
}
.detail-main {
    flex: 1;
    min-width: 0;
    display: flex;
    flex-direction: column;
    padding: 0 20px 0 31px;
}
.detail-pane > .vbar {
    width: 17px;
    flex: none;
}
.detail-scroll {
    height: 349px;
    flex: none;
    overflow: hidden;
}
.detail-top {
    display: flex;
    height: 54px;
    padding-top: 1px;
}
.detail-crumbs {
    padding-left: 5px;
    font-size: 12px;
    color: #6b778c;
}
.detail-crumb {
    display: flex;
    align-items: center;
    height: 20px;
    gap: 5px;
    letter-spacing: -0.1px;
}
.detail-slash {
    margin-left: 5px;
}
.detail-actions {
    margin-left: auto;
    display: flex;
    align-items: center;
    height: 40px;
    padding-right: 1px;
}
.watch {
    display: flex;
    align-items: center;
    gap: 9px;
    color: #0747a6;
    font-size: 14px;
}
.act-like {
    margin-left: 27px;
}
.act-share {
    margin-left: 24px;
}
.act-dots {
    margin-left: 21px;
}
.act-close {
    margin-left: 22px;
}
.detail-title {
    margin: 0;
    font-family: "Noto Sans", sans-serif;
    font-size: 23.5px;
    font-weight: 500;
    line-height: 28px;
    letter-spacing: -0.8px;
}
.quick-row {
    display: flex;
    gap: 8px;
    margin-top: 11px;
}
.state-btn {
    margin-top: 21px;
    width: 123px;
    height: 32px;
    display: flex;
    align-items: center;
    padding-left: 12px;
    gap: 9px;
    background: #0052cc;
    color: #fff;
    font-size: 14px;
    font-weight: 600;
    border-radius: 3px;
    letter-spacing: -0.3px;
}
.desc-label {
    margin-top: 10px;
    line-height: 20px;
    font-family: "Noto Sans", sans-serif;
    font-weight: 500;
    letter-spacing: -0.3px;
}
.desc-text {
    margin: 4px 0 0;
    font-size: 13.5px;
    line-height: 24px;
    color: #172b4d;
    letter-spacing: -0.2px;
}
.pinned {
    margin-top: 26px;
    height: 110px;
    padding: 0 12px;
    border: 1px solid #dfe1e6;
    border-radius: 3px;
}
.pinned-head {
    display: flex;
    align-items: center;
    justify-content: space-between;
    height: 41px;
    padding-right: 3px;
    font-weight: 600;
    letter-spacing: -0.4px;
}
.pinned-text {
    margin-top: 7px;
    letter-spacing: -0.1px;
    font-size: 13.5px;
    white-space: nowrap;
}
.pin-glyph {
    margin: 0 3px;
}
.comment-box {
    border-top: 2px solid #ebecf0;
    flex: 1;
}
.comment-row {
    display: flex;
    align-items: center;
    gap: 14px;
    padding: 15px 0 0 2px;
}
.comment-input {
    flex: 1;
    height: 40px;
    display: flex;
    align-items: center;
    padding-left: 20px;
    border: 1px solid #dfe1e6;
    border-radius: 3px;
    color: #6b778c;
    letter-spacing: -0.25px;
}
.pro-tip {
    margin: 9px 0 0 48px;
    font-size: 11.5px;
    color: #6b778c;
    letter-spacing: -0.2px;
}
.kbd {
    display: inline-block;
    width: 18px;
    height: 16px;
    background: #dfe1e6;
    border-radius: 3px;
    color: #42526e;
    font-weight: 700;
    text-align: center;
    line-height: 16px;
    margin: 0 2px;
}
```
